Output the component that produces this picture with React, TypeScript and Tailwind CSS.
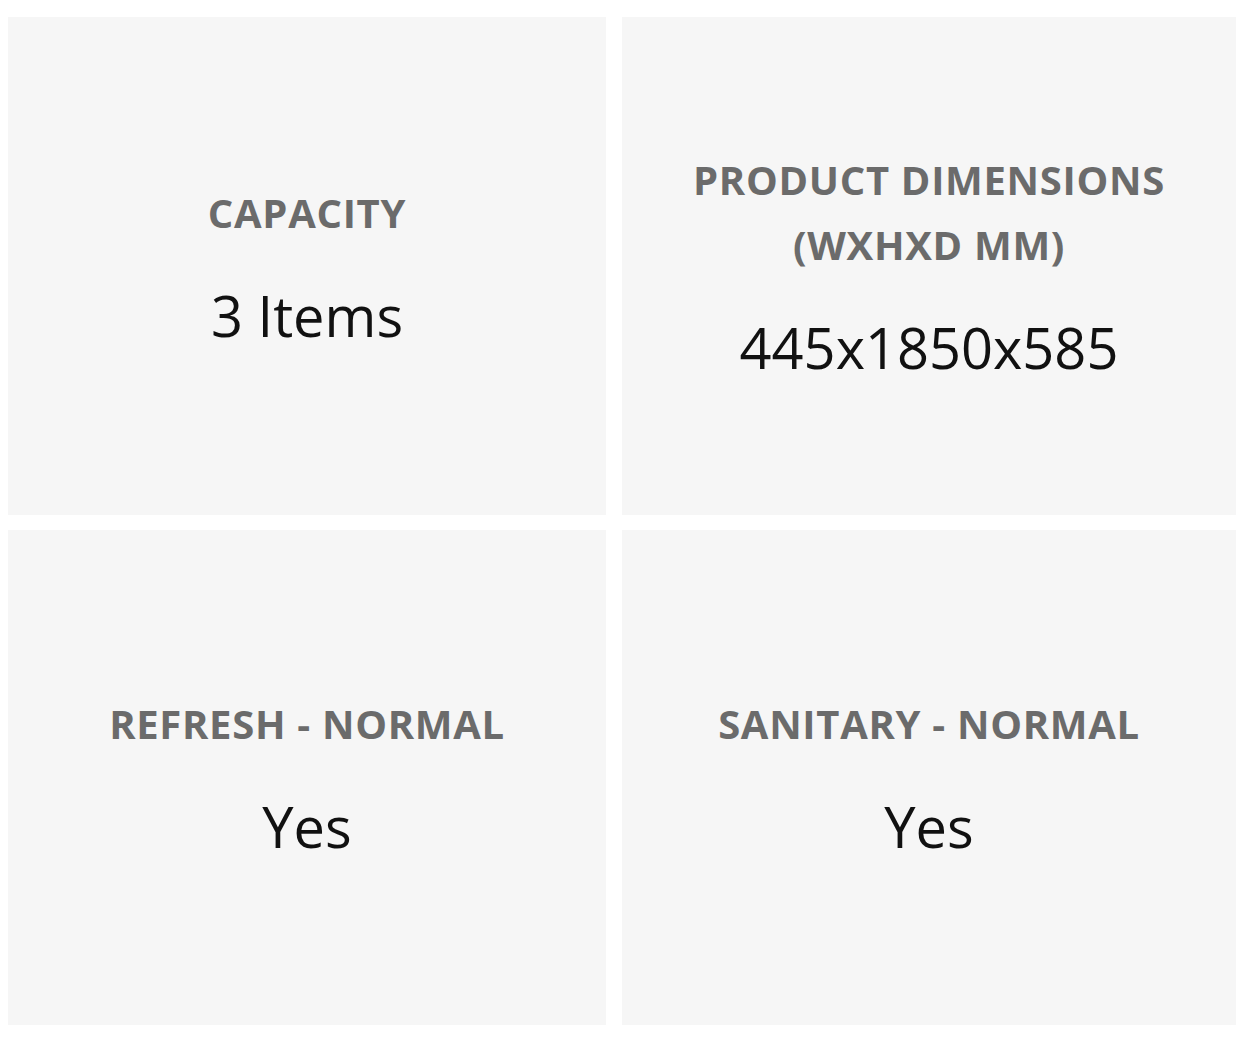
const specs = [
  { label: ["CAPACITY"], value: "3 Items" },
  { label: ["PRODUCT DIMENSIONS", "(WXHXD MM)"], value: "445x1850x585" },
  { label: ["REFRESH - NORMAL"], value: "Yes" },
  { label: ["SANITARY - NORMAL"], value: "Yes" },
]

function SpecCard({ label, value }: { label: string[]; value: string }) {
  return (
    <div className="flex flex-col items-center justify-center bg-[#f6f6f6] pb-[3px] text-center">
      <div className="text-[40px] leading-[65px] font-bold tracking-[0.7px] text-[#6b6b6b]">
        {label.map((line) => (
          <div key={line}>{line}</div>
        ))}
      </div>
      <div className="mt-[37px] text-[56px] leading-[1.2] text-[#111111]">{value}</div>
    </div>
  )
}

export default function App() {
  return (
    <div
      className="min-h-[1043px] w-[1240px] bg-white pl-2 pt-[17px] pb-[18px]"
      style={{ fontFamily: '"Open Sans", "Noto Sans", sans-serif' }}
    >
      <div className="grid grid-cols-[598px_614px] grid-rows-[498px_495px] gap-x-4 gap-y-[15px]">
        {specs.map((s) => (
          <SpecCard key={s.label.join(" ")} label={s.label} value={s.value} />
        ))}
      </div>
    </div>
  )
}
